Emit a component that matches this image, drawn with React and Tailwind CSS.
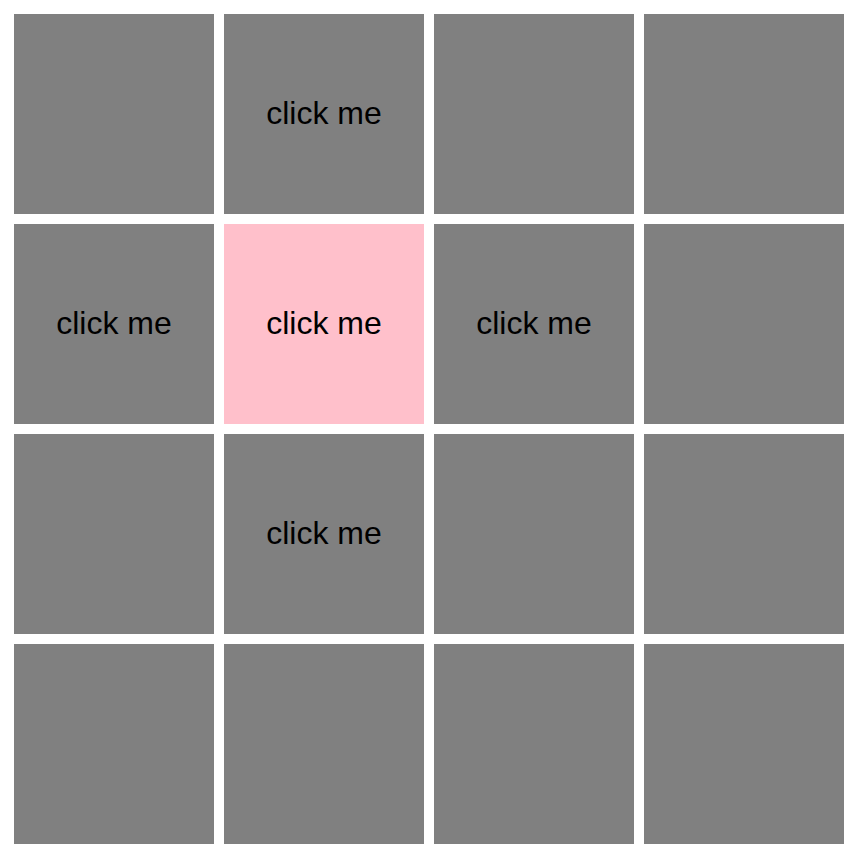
export default function App() {
  const labeled = new Set([1, 4, 5, 6, 9]);
  const cells = Array.from({ length: 16 }, (_, i) => i);
  return (
    <div className="w-[868px] h-[862px] bg-white pl-[14px] pt-[14px]">
      <div className="grid grid-cols-[repeat(4,200px)] grid-rows-[repeat(4,200px)] gap-[10px]">
        {cells.map((i) => (
          <div
            key={i}
            className={`flex items-center justify-center text-black text-[32px] leading-none pb-[2px] ${i === 5 ? "bg-[#ffc0cb]" : "bg-[#808080]"}`}
            style={{ fontFamily: '"Liberation Sans", Arial, sans-serif' }}
          >
            {labeled.has(i) ? "click me" : ""}
          </div>
        ))}
      </div>
    </div>
  );
}
